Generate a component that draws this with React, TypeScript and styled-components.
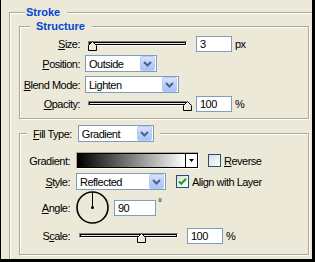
import React from 'react'
import styled, { createGlobalStyle } from 'styled-components'

const GlobalStyle = createGlobalStyle`
    body {
        margin: 0;
        background: #ECE9D8;
        font-family: "Liberation Sans", Arial, sans-serif;
        font-size: 11px;
        color: #000;
    }
`

const Window = styled.div`
    width: 315px;
    height: 262px;
    box-sizing: border-box;
    background: #ECE9D8;
    border-left: 1px solid #000;
    border-right: 3px solid #000;
    border-bottom: 3px solid #000;
    overflow: hidden;
    padding-top: 6px;
    letter-spacing: -0.5px;
`

const Group = styled.fieldset<{ $pt: number; $pb: number }>`
    margin: 0;
    min-width: 0;
    padding: ${p => p.$pt}px 0 ${p => p.$pb}px 0;
    border: 1px solid #ACA899;
    box-shadow: inset 1px 1px 0 #fff, 1px 1px 0 #fff;
`

const OuterGroup = styled(Group)`
    margin: 0 -40px 0 8px;
`

const InnerGroup = styled(Group)<{ $mt: number }>`
    margin: ${p => p.$mt}px 0 0 9px;
    width: 290px;
    box-sizing: border-box;
`

const Title = styled.legend<{ $ml: number; $pl: number; $pr: number }>`
    margin-left: ${p => p.$ml}px;
    padding: 0 ${p => p.$pr}px 0 ${p => p.$pl}px;
    height: 13px;
    line-height: 13px;
    font-weight: bold;
    letter-spacing: 0;
    color: #0046D5;
    background: #ECE9D8;
`

const FillLegend = styled.legend`
    margin-left: 7px;
    padding: 0 6px;
    background: #ECE9D8;
`

const LegendRow = styled.span`
    display: flex;
    align-items: center;
    height: 17px;
    gap: 6px;
`

const Row = styled.div<{ $h: number; $mb?: number }>`
    display: flex;
    align-items: center;
    height: ${p => p.$h}px;
    margin-bottom: ${p => p.$mb ?? 0}px;
`

const Label = styled.label<{ $w: number; $gap: number }>`
    width: ${p => p.$w}px;
    margin-right: ${p => p.$gap}px;
    flex-shrink: 0;
    text-align: right;
    white-space: nowrap;
`

const TextInput = styled.input<{ $w: number }>`
    width: ${p => p.$w}px;
    height: 16px;
    box-sizing: border-box;
    border: 1px solid #7F9DB9;
    background: #fff;
    padding: 0 3px;
    margin: 0;
    font: inherit;
    letter-spacing: -0.5px;
    outline: none;
`

const Unit = styled.span`
    margin-left: 3px;
`

const Degree = styled.span`
    align-self: flex-start;
    margin: 7px 0 0 2px;
    font-size: 10px;
`

const Select = styled.div<{ $w: number }>`
    width: ${p => p.$w}px;
    height: 17px;
    box-sizing: border-box;
    border: 1px solid #7F9DB9;
    background: #fff;
    display: flex;
    align-items: center;
    flex-shrink: 0;
`

const SelectText = styled.span`
    flex: 1;
    padding-left: 3px;
    white-space: nowrap;
`

const SelectButton = styled.span`
    width: 15px;
    height: 15px;
    margin-right: 1px;
    box-sizing: border-box;
    border: 1px solid #B7CBF5;
    border-radius: 2px;
    background: linear-gradient(180deg, #D6E3FE 0%, #BDD0FA 50%, #A9C1F4 100%);
    display: flex;
    align-items: center;
    justify-content: center;
`

const SliderWrap = styled.div`
    position: relative;
    width: 106px;
    height: 16px;
    margin-right: 5px;
    flex-shrink: 0;
`

const Track = styled.div`
    margin: 5px 0 0 3px;
    width: 99px;
    height: 5px;
    box-sizing: border-box;
    border: 1px solid;
    border-color: #808080 #fff #fff #808080;
`

const TrackInner = styled.div`
    height: 3px;
    box-sizing: border-box;
    border: 1px solid #000;
    background: #ECE9D8;
`

const Thumb = styled.svg`
    position: absolute;
    top: 5px;
`

const CheckBox = styled.span`
    width: 13px;
    height: 13px;
    box-sizing: border-box;
    border: 1px solid #1C5180;
    background: linear-gradient(135deg, #DCDCD7 0%, #fff 100%);
    display: flex;
    align-items: center;
    justify-content: center;
    flex-shrink: 0;
`

const CheckLabel = styled.label<{ $ml: number }>`
    display: flex;
    align-items: center;
    gap: 3px;
    margin-left: ${p => p.$ml}px;
    white-space: nowrap;
`

const GradientBox = styled.div`
    width: 123px;
    height: 17px;
    box-sizing: border-box;
    border: 1px solid;
    border-color: #ACA899 #fff #fff #ACA899;
    display: flex;
    flex-shrink: 0;
`

const GradientInner = styled.div`
    flex: 1;
    display: flex;
    border: 1px solid #000;
`

const Ramp = styled.div`
    flex: 1;
    background: linear-gradient(to right, #000, #fff);
`

const RampButton = styled.div`
    width: 11px;
    border-left: 1px solid #000;
    background: #fff;
    display: flex;
    align-items: center;
    justify-content: center;
`

const Dial = styled.svg`
    margin-right: 5px;
    flex-shrink: 0;
`

function Chevron() {
    return (
        <svg width="9" height="6" viewBox="0 0 9 6">
            <path d="M1 1 L4.5 4.5 L8 1" fill="none" stroke="#4D6185" strokeWidth="2" />
        </svg>
    )
}

function Dropdown({ value, width }: { value: string; width: number }) {
    return (
        <Select $w={width}>
            <SelectText>{value}</SelectText>
            <SelectButton><Chevron /></SelectButton>
        </Select>
    )
}

function Slider({ frac }: { frac: number }) {
    return (
        <SliderWrap>
            <Track><TrackInner /></Track>
            <Thumb width="9" height="10" viewBox="0 0 9 10" style={{ left: 3 + frac * 95 }}>
                <path d="M0.5 9.5 V4.5 L4.5 0.5 L8.5 4.5 V9.5 Z" fill="#ECE9D8" stroke="#000" />
                <path d="M1.5 8.5 V4.9 L4.5 1.9" fill="none" stroke="#fff" />
            </Thumb>
        </SliderWrap>
    )
}

function Check({ checked }: { checked?: boolean }) {
    return (
        <CheckBox>
            {checked && (
                <svg width="9" height="9" viewBox="0 0 9 9">
                    <path d="M1 4.5 L3.3 6.8 L8 1.8" fill="none" stroke="#21A121" strokeWidth="2" />
                </svg>
            )}
        </CheckBox>
    )
}

export default function App() {
    return (
        <Window>
            <GlobalStyle />
            <OuterGroup $pt={1} $pb={20}>
                <Title $ml={15} $pl={1} $pr={7}>Stroke</Title>

                <InnerGroup $mt={0} $pt={3} $pb={6}>
                    <Title $ml={10} $pl={6} $pr={7}>Structure</Title>
                    <Row $h={16} $mb={3}>
                        <Label $w={60} $gap={5}><u>S</u>ize:</Label>
                        <Slider frac={0} />
                        <TextInput $w={36} defaultValue="3" />
                        <Unit>px</Unit>
                    </Row>
                    <Row $h={17} $mb={4}>
                        <Label $w={60} $gap={5}><u>P</u>osition:</Label>
                        <Dropdown value="Outside" width={72} />
                    </Row>
                    <Row $h={17} $mb={3}>
                        <Label $w={60} $gap={5}><u>B</u>lend Mode:</Label>
                        <Dropdown value="Lighten" width={94} />
                    </Row>
                    <Row $h={16}>
                        <Label $w={60} $gap={5}><u>O</u>pacity:</Label>
                        <Slider frac={1} />
                        <TextInput $w={36} defaultValue="100" />
                        <Unit>%</Unit>
                    </Row>
                </InnerGroup>

                <InnerGroup $mt={6} $pt={10} $pb={10}>
                    <FillLegend>
                        <LegendRow>
                            <span><u>F</u>ill Type:</span>
                            <Dropdown value="Gradient" width={76} />
                        </LegendRow>
                    </FillLegend>
                    <Row $h={17} $mb={4}>
                        <Label $w={50} $gap={6}>Gradient:</Label>
                        <GradientBox>
                            <GradientInner>
                                <Ramp />
                                <RampButton>
                                    <svg width="5" height="3" viewBox="0 0 5 3">
                                        <path d="M0 0 H5 L2.5 3 Z" fill="#000" />
                                    </svg>
                                </RampButton>
                            </GradientInner>
                        </GradientBox>
                        <CheckLabel $ml={9}><Check /><span><u>R</u>everse</span></CheckLabel>
                    </Row>
                    <Row $h={17}>
                        <Label $w={50} $gap={6}><u>S</u>tyle:</Label>
                        <Dropdown value="Reflected" width={90} />
                        <CheckLabel $ml={10}><Check checked /><span>Align with Layer</span></CheckLabel>
                    </Row>
                    <Row $h={35} $mb={3}>
                        <Label $w={50} $gap={6}><u>A</u>ngle:</Label>
                        <Dial width="33" height="35" viewBox="0 0 33 35">
                            <circle cx="16.5" cy="17.5" r="15.5" fill="none" stroke="#000" strokeWidth="1.6" />
                            <line x1="16.5" y1="17.5" x2="16.5" y2="2" stroke="#000" strokeWidth="1" />
                            <circle cx="16.5" cy="17.5" r="1.5" fill="#000" />
                        </Dial>
                        <TextInput $w={42} defaultValue="90" />
                        <Degree>°</Degree>
                    </Row>
                    <Row $h={16}>
                        <Label $w={50} $gap={6}>S<u>c</u>ale:</Label>
                        <Slider frac={0.61} />
                        <TextInput $w={36} defaultValue="100" />
                        <Unit>%</Unit>
                    </Row>
                </InnerGroup>
            </OuterGroup>
        </Window>
    )
}
